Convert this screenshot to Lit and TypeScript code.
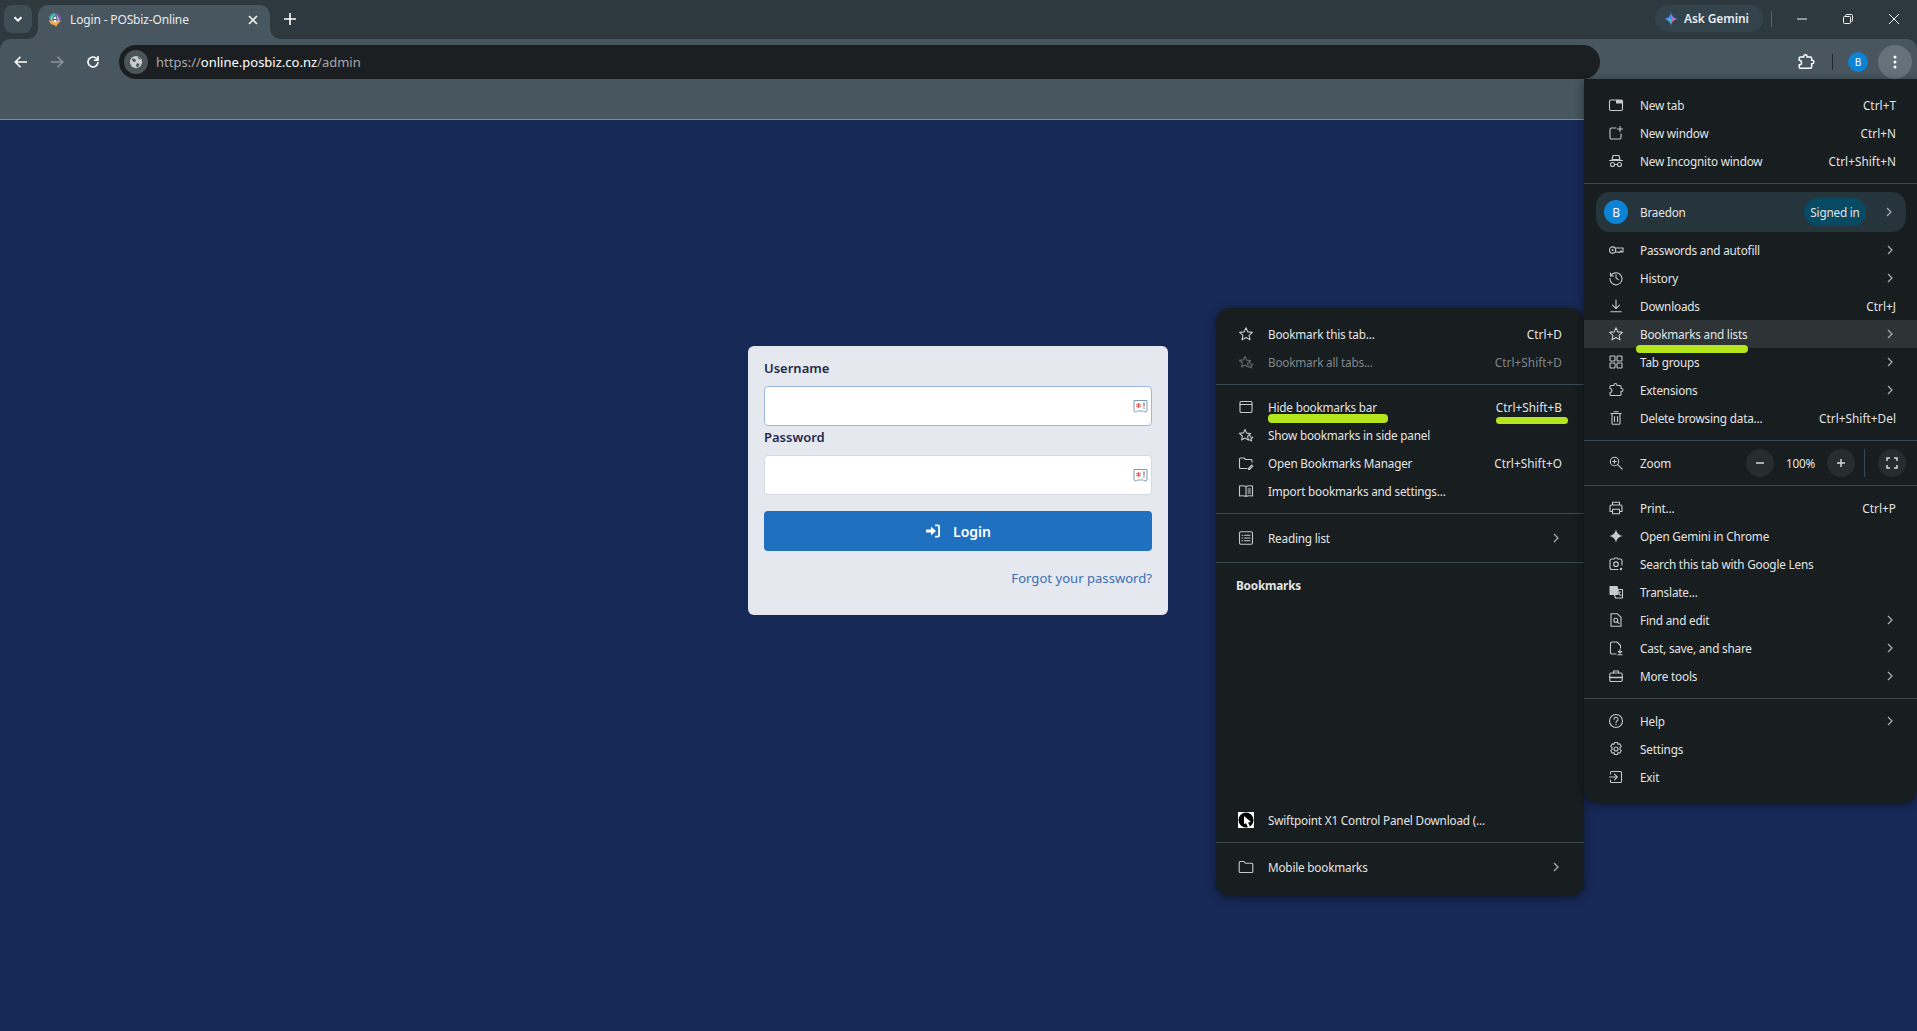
import { LitElement, html, css, svg, nothing } from 'lit';
import { customElement } from 'lit/decorators.js';

const PUZZLE = svg`<path d="M3 3.500h3V3a1.500 1.500 0 0 1 3 0v.5h3a1 1 0 0 1 1 1v2h.5a1.500 1.500 0 0 1 0 3H13v3a1 1 0 0 1-1 1H3a1 1 0 0 1-1-1v-2c1.500 0 2-1 2-1.700S3.500 6.500 2 6.500v-2a1 1 0 0 1 1-1z"/>`;

// line icons, all on a 16x16 box
const ICONS: Record<string, any> = {
  newTab: svg`<rect x="1.500" y="3" width="13" height="10.500" rx="1.500"/><path class="fill" d="M8 3h6.500v3.500H8z"/>`,
  newWindow: svg`<path d="M8 3H3.500A1.500 1.500 0 0 0 2 4.500v8A1.500 1.500 0 0 0 3.500 14h8a1.500 1.500 0 0 0 1.500-1.500V9M12 1.500v5M9.500 4h5"/>`,
  incognito: svg`<path d="M5 2.500h6l1 4H4zM1.500 7.500h13"/><circle cx="4.500" cy="11.500" r="2"/><circle cx="11.500" cy="11.500" r="2"/><path d="M6.500 11.500h3"/>`,
  key: svg`<circle cx="4.600" cy="8" r="3.100"/><circle class="fill" cx="4.600" cy="8" r="1"/><path d="M7.700 6h7.300v4h-1.500V9h-1.500v1.500H10V10H7.700"/>`,
  history: svg`<path d="M2.500 3v3h3M2.700 6A6 6 0 1 1 2 8.500M8 4.800V8l2.300 1.600"/>`,
  download: svg`<path d="M8 2v8.500M4.500 7.200 8 10.700l3.500-3.500M2.800 13.700h10.400"/>`,
  star: svg`<path d="m8 1.800 1.900 4.100 4.500.5-3.300 3 .9 4.400L8 11.600l-4 2.200.9-4.400-3.300-3 4.500-.5z"/>`,
  starPlus: svg`<path d="m7 2.500 1.600 3.600 4 .4-3 2.700.8 3.900L7 11l-3.400 1.900.8-3.900-3-2.700 4-.4z"/><path d="m11.500 8 1 2 2.300.3-1.700 1.500.5 2.200-2.100-1.200"/>`,
  groups: svg`<rect x="2" y="2" width="5" height="5" rx=".8"/><rect x="9" y="2" width="5" height="5" rx=".8"/><rect x="2" y="9" width="5" height="5" rx=".8"/><rect x="9" y="9" width="5" height="5" rx=".8"/>`,
  puzzle: PUZZLE,
  trash: svg`<path d="M2.800 3.500h10.400M6 1.800h4"/><rect x="4" y="3.500" width="8" height="10.700" rx="1"/><path d="M6.500 6.500v5M9.500 6.500v5"/>`,
  zoom: svg`<circle cx="6.500" cy="6.500" r="4.200"/><path d="m9.700 9.700 4.500 4.500M6.500 4.700v3.600M4.700 6.500h3.600"/>`,
  print: svg`<path d="M4.500 5V2.200h7V5M4.500 11.500H2V6.600A1.600 1.600 0 0 1 3.600 5h8.800A1.600 1.600 0 0 1 14 6.600v4.900h-2.500"/><rect x="4.500" y="9.200" width="7" height="4.600"/>`,
  gemini: svg`<path class="fill" d="M8 1c.5 4 3 6.500 7 7-4 .5-6.500 3-7 7-.5-4-3-6.500-7-7 4-.5 6.500-3 7-7z"/>`,
  lens: svg`<path d="M5.500 3H4a2 2 0 0 0-2 2v6.500a2 2 0 0 0 2 2h6M10.500 3H12a2 2 0 0 1 2 2v4"/><path d="M6 3l.7-1h2.600l.7 1"/><circle cx="8" cy="8.200" r="2.300"/><circle class="fill" cx="13" cy="13" r="1.200"/>`,
  translate: svg`<path class="fill" d="M1.500 2h8l1 3.500V11h-9z"/><path d="M10 5.500h4.500V14H7.500l-1-3"/><path d="M10 8h2.500M11 8.500c0 1.500.7 2.500 2 3"/>`,
  find: svg`<path d="M3 1.800h6.500L13 5.300v8.900H3z"/><circle cx="7.800" cy="8.300" r="2"/><path d="m9.300 9.800 1.700 1.700"/>`,
  cast: svg`<path d="M8 14H4a1.500 1.500 0 0 1-1.500-1.500v-9A1.500 1.500 0 0 1 4 2h5l3.500 3.500V8"/><path d="M12 9.500v3.300M10.300 11.500l1.700 1.600 1.700-1.600M9.800 14.800h4.400"/>`,
  tools: svg`<path d="M5.500 5V3h5v2"/><rect x="1.800" y="5" width="12.400" height="8.500" rx="1.200"/><path class="thick" d="M1.800 9.500h12.400"/>`,
  help: svg`<circle cx="8" cy="8" r="6.500"/><path d="M6 6.300A2 2 0 1 1 9 8c-.7.400-1 .8-1 1.600"/><circle class="fill" cx="8" cy="11.500" r=".7"/>`,
  gear: svg`<path d="m6.500 1.500h3l.5 1.900 1.800-.6 1.500 2.600-1.400 1.300.1.800-.1.800 1.400 1.300-1.500 2.600-1.800-.6-.5 1.900h-3l-.5-1.900-1.800.6-1.500-2.600 1.400-1.300-.1-.8.1-.8-1.400-1.300 1.500-2.600 1.800.6z"/><circle cx="8" cy="8" r="2"/>`,
  exit: svg`<path d="M2.500 5V3.500a1 1 0 0 1 1-1h9a1 1 0 0 1 1 1v9a1 1 0 0 1-1 1h-9a1 1 0 0 1-1-1V11M1.500 8H9M6.500 5.200 9.300 8l-2.800 2.800"/>`,
  bar: svg`<rect x="2" y="2.500" width="12" height="11" rx="1.200"/><path d="M2 5.500h12"/>`,
  folderEdit: svg`<path d="M14 7V5.500a1 1 0 0 0-1-1H7.500L6 3H2.500a1 1 0 0 0-1 1v8.500a1 1 0 0 0 1 1H9"/><path d="m10.500 13.500 3.300-3.300 1 1-3.300 3.300h-1z"/>`,
  book: svg`<path d="M8 3.500C6.500 2.700 4 2.700 1.500 3v10c2.500-.3 5-.3 6.500.5 1.500-.8 4-.8 6.500-.5V3C12 2.700 9.500 2.700 8 3.500zM8 3.500v10M10 6h2.500M10 8h2.500M10 10h2.500"/>`,
  readingList: svg`<rect x="1.500" y="1.800" width="13" height="12.400" rx="1.500"/><path d="M6.500 5.200h5.500M6.500 8h5.500M6.500 10.800h5.500M4 5.200h.8M4 8h.8M4 10.800h.8"/>`,
  folder: svg`<path d="M1.200 3.500a1 1 0 0 1 1-1h3.800l1.600 1.800h6.200a1 1 0 0 1 1 1v7.200a1 1 0 0 1-1 1H2.200a1 1 0 0 1-1-1z"/>`,
};

const icon = (name: string) => html`<svg class="ico" viewBox="0 0 16 16">${ICONS[name]}</svg>`;

const chevron = html`<svg class="chev" viewBox="0 0 8 12"><path d="m2 2 4 4-4 4"/></svg>`;

interface MenuRow {
  icon?: string;
  label?: string;
  keys?: string;
  more?: boolean;
  hover?: boolean;
  off?: boolean;
  mark?: string;
  keyMark?: boolean;
}

const MAIN_TOP: MenuRow[] = [
  { icon: 'newTab', label: 'New tab', keys: 'Ctrl+T' },
  { icon: 'newWindow', label: 'New window', keys: 'Ctrl+N' },
  { icon: 'incognito', label: 'New Incognito window', keys: 'Ctrl+Shift+N' },
];

const MAIN_BROWSE: MenuRow[] = [
  { icon: 'key', label: 'Passwords and autofill', more: true },
  { icon: 'history', label: 'History', more: true },
  { icon: 'download', label: 'Downloads', keys: 'Ctrl+J' },
  { icon: 'star', label: 'Bookmarks and lists', more: true, hover: true, mark: 'mark-lists' },
  { icon: 'groups', label: 'Tab groups', more: true },
  { icon: 'puzzle', label: 'Extensions', more: true },
  { icon: 'trash', label: 'Delete browsing data...', keys: 'Ctrl+Shift+Del' },
];

const MAIN_TOOLS: MenuRow[] = [
  { icon: 'print', label: 'Print...', keys: 'Ctrl+P' },
  { icon: 'gemini', label: 'Open Gemini in Chrome' },
  { icon: 'lens', label: 'Search this tab with Google Lens' },
  { icon: 'translate', label: 'Translate...' },
  { icon: 'find', label: 'Find and edit', more: true },
  { icon: 'cast', label: 'Cast, save, and share', more: true },
  { icon: 'tools', label: 'More tools', more: true },
];

const MAIN_END: MenuRow[] = [
  { icon: 'help', label: 'Help', more: true },
  { icon: 'gear', label: 'Settings' },
  { icon: 'exit', label: 'Exit' },
];

const SUB_TOP: MenuRow[] = [
  { icon: 'star', label: 'Bookmark this tab...', keys: 'Ctrl+D' },
  { icon: 'starPlus', label: 'Bookmark all tabs...', keys: 'Ctrl+Shift+D', off: true },
];

const SUB_MANAGE: MenuRow[] = [
  { icon: 'bar', label: 'Hide bookmarks bar', keys: 'Ctrl+Shift+B', mark: 'mark-hide', keyMark: true },
  { icon: 'starPlus', label: 'Show bookmarks in side panel' },
  { icon: 'folderEdit', label: 'Open Bookmarks Manager', keys: 'Ctrl+Shift+O' },
  { icon: 'book', label: 'Import bookmarks and settings...' },
];

@customElement('app-root')
export class AppRoot extends LitElement {
  static styles = css`
    :host {
      display: block;
      position: relative;
      width: 100%;
      height: 1031px;
      overflow: hidden;
      background: #172957;
      font-family: 'Noto Sans', 'Liberation Sans', sans-serif;
      color: #e3e3e3;
    }

    /* browser frame */
    .frame { background: #2d383f; }
    .strip {
      height: 39px;
      display: flex;
      align-items: flex-start;
      box-sizing: border-box;
    }
    .tab-search {
      width: 28px;
      height: 28px;
      margin: 5px 6px 0 4px;
      border-radius: 8px;
      background: #3f4d55;
      display: flex;
      align-items: center;
      justify-content: center;
    }
    .tab-search svg { width: 10px; height: 10px; fill: none; stroke: #fff; stroke-width: 2; }
    .tab {
      position: relative;
      width: 232px;
      height: 34px;
      margin-top: 5px;
      background: #47565f;
      border-radius: 10px 10px 0 0;
      display: flex;
      align-items: center;
      box-sizing: border-box;
      padding: 0 10px 5px;
      font-size: 12px;
      letter-spacing: -0.15px;
      color: #e8eaed;
    }
    /* the concave feet on both sides of the active tab */
    .tab::before,
    .tab::after {
      content: '';
      position: absolute;
      bottom: 0;
      width: 10px;
      height: 10px;
    }
    .tab::before { left: -10px; background: radial-gradient(circle at 0 0, transparent 9.500px, #47565f 10px); }
    .tab::after { right: -10px; background: radial-gradient(circle at 100% 0, transparent 9.500px, #47565f 10px); }
    .favicon { width: 14px; height: 14px; margin-right: 8px; flex: none; }
    .tab-title { flex: 1; }
    .tab-close { width: 10px; height: 10px; fill: none; stroke: #f0f0f0; stroke-width: 1.6; margin-right: 2px; }
    .new-tab { width: 12px; height: 12px; margin: 13px 0 0 14px; fill: none; stroke: #fff; stroke-width: 1.6; }
    .strip-right {
      margin-left: auto;
      display: flex;
      align-items: center;
      height: 38px;
    }
    .gemini {
      width: 108px;
      height: 27px;
      margin-top: -1px;
      border-radius: 13px;
      background: #33434c;
      display: flex;
      align-items: center;
      gap: 5px;
      box-sizing: border-box;
      padding-left: 8px;
      font-size: 12px;
      font-weight: 600;
      letter-spacing: -0.1px;
      color: #e8eaed;
    }
    .gemini svg { width: 16px; height: 16px; }
    .strip-sep { width: 1px; height: 16px; margin: 0 7px 0 8px; background: #55636b; }
    .win { width: 46px; height: 38px; display: flex; align-items: center; justify-content: center; }
    .win svg { width: 12px; height: 12px; fill: none; stroke: #f2f2f2; stroke-width: 1; }

    .toolbar {
      height: 40px;
      padding-top: 6px;
      background: #47565f;
      border-radius: 10px 10px 0 0;
      display: flex;
      align-items: center;
      box-sizing: border-box;
      position: relative;
    }
    .nav { width: 36px; height: 34px; display: flex; align-items: center; justify-content: center; flex: none; }
    .nav svg { width: 16px; height: 16px; fill: none; stroke: #fff; stroke-width: 1.6; }
    .nav.dim svg { stroke: #8a959b; }
    .nav-group { display: flex; padding-left: 3px; margin-right: 8px; }
    .omnibox {
      width: 1481px;
      height: 34px;
      border-radius: 17px;
      background: #1c1f22;
      display: flex;
      align-items: center;
      box-sizing: border-box;
      padding-left: 5px;
      font-size: 13px;
      color: #a4a8ab;
      flex: none;
    }
    .site {
      width: 24px;
      height: 24px;
      border-radius: 50%;
      background: #4a5459;
      display: flex;
      align-items: center;
      justify-content: center;
      margin-right: 8px;
    }
    .site svg { width: 14px; height: 14px; }
    .omnibox b { font-weight: 400; color: #fff; }
    .tool-right { margin-left: auto; display: flex; align-items: center; }
    .ext { width: 18px; height: 18px; fill: none; stroke: #fff; stroke-width: 1.3; margin-right: 17px; }
    .tool-sep { width: 1px; height: 16px; background: #1e272c; margin-right: 15px; }
    .avatar {
      width: 20px;
      height: 20px;
      border-radius: 50%;
      background: #0b84d6;
      color: #fff;
      font-size: 10px;
      display: flex;
      align-items: center;
      justify-content: center;
      margin-right: 10px;
    }
    .dots {
      width: 34px;
      height: 34px;
      margin-right: 5px;
      border-radius: 50%;
      background: #66727a;
      display: flex;
      align-items: center;
      justify-content: center;
    }
    .dots svg { width: 4px; height: 14px; fill: #fff; }
    .bookmarks-bar { height: 41px; background: #47565f; border-bottom: 1px solid #7d8c9c; box-sizing: border-box; }

    /* login page */
    .page {
      display: flex;
      justify-content: center;
      padding: 226px 1px 0 0;
    }
    .card {
      width: 420px;
      height: 269px;
      box-sizing: border-box;
      padding: 12px 16px;
      background: #e6e8ef;
      border-radius: 6px;
    }
    .field-label { font-size: 13px; font-weight: 600; line-height: 20px; color: #1f2a4d; }
    .input {
      height: 40px;
      margin: 8px 0 1px;
      background: #fff;
      border: 1px solid #d6d9e1;
      border-radius: 4px;
      box-sizing: border-box;
      display: flex;
      align-items: center;
      justify-content: flex-end;
      padding-right: 3px;
    }
    .input.focus { border-color: #9bb9de; }
    .input svg { width: 15px; height: 15px; margin-top: 1px; }
    .login {
      height: 40px;
      margin-top: 16px;
      border-radius: 4px;
      background: #2070c0;
      color: #fff;
      font-size: 14px;
      font-weight: 600;
      display: flex;
      align-items: center;
      justify-content: center;
      gap: 12px;
    }
    .login svg { width: 16px; height: 16px; fill: #fff; stroke: none; }
    .forgot { margin-top: 17px; text-align: right; font-size: 13.100px; line-height: 20px; color: #3a70b0; }

    /* chrome menus */
    .menu {
      position: absolute;
      background: #181d20;
      box-shadow: 0 2px 10px rgba(0, 0, 0, 0.45);
      box-sizing: border-box;
      font-size: 11.750px;
      letter-spacing: -0.2px;
      display: flex;
      flex-direction: column;
    }
    .main-menu { left: 1584px; top: 79px; width: 333px; height: 724px; padding: 12px 0; border-radius: 0 0 14px 14px; }
    .sub-menu { left: 1216px; top: 308px; width: 368px; height: 588px; padding: 12px 0 15px; border-radius: 14px; }
    .row {
      position: relative;
      flex: none;
      height: 28px;
      display: flex;
      align-items: center;
      box-sizing: border-box;
      padding-right: 21px;
    }
    .main-menu .row { padding-left: 24px; }
    .sub-menu .row { padding-left: 22px; padding-right: 22px; }
    .row.hover { background: #2e3336; }
    .row.off { color: #80868a; }
    .ico {
      width: 16px;
      height: 16px;
      flex: none;
      fill: none;
      stroke: #c7c9cb;
      stroke-width: 1.1;
      stroke-linejoin: round;
      stroke-linecap: round;
      margin-right: 16px;
    }
    .ico .fill { fill: #c7c9cb; stroke: none; }
    .ico .thick { stroke-width: 1.6; }
    .sub-menu .ico { margin-right: 14px; }
    .row.off .ico { stroke: #666c70; }
    .keys { margin-left: auto; letter-spacing: 0.05px; }
    .chev { width: 8px; height: 12px; margin-left: auto; margin-right: 2px; fill: none; stroke: #a6aaac; stroke-width: 1.300; }
    .sep { height: 1px; flex: none; margin: 8px 0; background: #3b4850; }
    .sep.before-list { margin: 8px 0 10px; }
    .sep.after-list { margin: 10px 0 9px; }
    .sep.end { margin: 8px 0 10px; }
    .top-gap { margin-top: 4px; }

    .profile {
      flex: none;
      height: 40px;
      width: 310px;
      margin-left: 12px;
      border-radius: 14px;
      background: #26343c;
      display: flex;
      align-items: center;
      box-sizing: border-box;
      padding: 0 11px 0 8px;
    }
    .profile-pic {
      width: 24px;
      height: 24px;
      margin-right: 12px;
      border-radius: 50%;
      background: #0b84d6;
      color: #fff;
      font-size: 12px;
      display: flex;
      align-items: center;
      justify-content: center;
    }
    .signed {
      margin-left: auto;
      margin-right: 19px;
      width: 62px;
      height: 28px;
      border-radius: 14px;
      background: #074a63;
      display: flex;
      align-items: center;
      justify-content: center;
    }
    .profile .chev { margin-left: 0; }

    .main-menu .zoom-row { padding-right: 11px; }
    .zoom-controls { margin-left: auto; display: flex; align-items: center; }
    .round {
      width: 28px;
      height: 28px;
      border-radius: 50%;
      background: #262c2f;
      display: flex;
      align-items: center;
      justify-content: center;
    }
    .round svg { width: 12px; height: 12px; fill: none; stroke: #d8d8d8; stroke-width: 1.500; }
    .percent { width: 53px; text-align: center; }
    .zoom-sep { width: 1px; height: 28px; margin: 0 13px 0 9px; background: #3b4850; }

    .section-title { flex: none; height: 26px; margin-bottom: 2px; display: flex; align-items: center; padding-left: 20px; font-weight: 700; }
    .push { margin-top: auto; }
    .swift { width: 16px; height: 16px; flex: none; margin-right: 14px; }

    /* green highlighter marks drawn over the screenshot */
    .mark { position: absolute; background: #b5e61d; border-radius: 4px; }
    .mark-lists { left: 52px; top: 25px; width: 112px; height: 8px; }
    .mark-hide { left: 52px; top: 21px; width: 120px; height: 9px; }
    .mark-keys { left: 280px; top: 24px; width: 72px; height: 7px; }
  `;

  renderRow(r: MenuRow) {
    return html`
      <div class="row ${r.hover ? 'hover' : ''} ${r.off ? 'off' : ''}">
        ${r.icon ? icon(r.icon) : nothing}
        <span>${r.label}</span>
        ${r.keys ? html`<span class="keys">${r.keys}</span>` : nothing}
        ${r.more ? chevron : nothing}
        ${r.mark ? html`<span class="mark ${r.mark}"></span>` : nothing}
        ${r.keyMark ? html`<span class="mark mark-keys"></span>` : nothing}
      </div>
    `;
  }

  renderFrame() {
    return html`
      <div class="frame">
        <div class="strip">
          <div class="tab-search"><svg viewBox="0 0 10 10"><path d="m1.500 3.200 3.500 3.500 3.500-3.500"/></svg></div>
          <div class="tab">
            <svg class="favicon" viewBox="0 0 14 14">
              <circle cx="7" cy="6" r="6" fill="#7a55c8"/>
              <path d="M1 6a6 6 0 0 1 6-6v6z" fill="#35b5a5"/>
              <path d="M1 7.500a6 6 0 0 0 5.500 4.500l1.500 2 1.500-2.500L13 7.500z" fill="#f0a93c"/>
              <circle cx="7" cy="6" r="3.600" fill="#e6edf2"/>
              <path d="M5 8.500V5a2 2 0 0 1 4 0v3.500M5 6.500h4" fill="none" stroke="#3f5866" stroke-width="1.100"/>
            </svg>
            <span class="tab-title">Login - POSbiz-Online</span>
            <svg class="tab-close" viewBox="0 0 10 10"><path d="m1 1 8 8M9 1 1 9"/></svg>
          </div>
          <svg class="new-tab" viewBox="0 0 12 12"><path d="M6 0v12M0 6h12"/></svg>
          <div class="strip-right">
            <div class="gemini">
              <svg viewBox="0 0 16 16">
                <path d="M8 1c-.5 4-3 6.500-7 7h7z" fill="#3f8cf0"/>
                <path d="M8 1c.5 4 3 6.500 7 7H8z" fill="#8a78e0"/>
                <path d="M15 8c-4 .5-6.500 3-7 7V8z" fill="#e0705a"/>
                <path d="M8 15c-.5-4-3-6.500-7-7h7z" fill="#55b0d8"/>
              </svg>
              <span>Ask Gemini</span>
            </div>
            <div class="strip-sep"></div>
            <div class="win"><svg viewBox="0 0 12 12"><path d="M1 6h10"/></svg></div>
            <div class="win"><svg viewBox="0 0 12 12"><rect x="1.500" y="3.500" width="7" height="7" rx="1"/><path d="M3.500 3.500V2.500a1 1 0 0 1 1-1h5a1 1 0 0 1 1 1v5a1 1 0 0 1-1 1h-1"/></svg></div>
            <div class="win"><svg viewBox="0 0 12 12"><path d="m1 1 10 10M11 1 1 11"/></svg></div>
          </div>
        </div>
        <div class="toolbar">
          <div class="nav-group">
            <div class="nav"><svg viewBox="0 0 16 16"><path d="M14 8H2.500M7.500 2.800 2.300 8l5.200 5.200"/></svg></div>
            <div class="nav dim"><svg viewBox="0 0 16 16"><path d="M2 8h11.500M8.500 2.800 13.700 8l-5.200 5.200"/></svg></div>
            <div class="nav"><svg viewBox="0 0 16 16"><path d="M13 8a5 5 0 1 1-1.500-3.600L13 6M13 2v4.200H8.800"/></svg></div>
          </div>
          <div class="omnibox">
            <div class="site">
              <svg viewBox="0 0 16 16"><circle cx="8" cy="8" r="7" fill="#c9cdcf"/><path d="M3 4.500 6 4l2 2-1 2-2.500-.5zM9 9.500l3 .5-1 3-2 1-1-2zM9.500 1.800 11 4.500l2.800.5L12.500 3z" fill="#4a5459"/></svg>
            </div>
            <span>https://<b>online.posbiz.co.nz</b>/admin</span>
          </div>
          <div class="tool-right">
            <svg class="ext" viewBox="0 0 16 16">${PUZZLE}</svg>
            <div class="tool-sep"></div>
            <div class="avatar">B</div>
            <div class="dots"><svg viewBox="0 0 4 14"><circle cx="2" cy="2" r="1.500"/><circle cx="2" cy="7" r="1.500"/><circle cx="2" cy="12" r="1.500"/></svg></div>
          </div>
        </div>
        <div class="bookmarks-bar"></div>
      </div>
    `;
  }

  renderLogin() {
    const filler = html`<svg viewBox="0 0 15 15">
      <path d="M1 1.500h13v10.500c-1 1.500-3 1-3.500 0h-6c-.5 1-2.500 1.500-3.500 0z" fill="#fff" stroke="#7d9bb8" stroke-width="1"/>
      <path d="M5.500 4v5M3.300 5.200l4.400 2.600M7.700 5.200 3.300 7.800" stroke="#e05a55" stroke-width="1.100" fill="none"/>
      <path d="M11 3.500v4M11 8.500v1.200" stroke="#666" stroke-width="1.100" fill="none"/>
    </svg>`;
    return html`
      <div class="page">
        <div class="card">
          <div class="field-label">Username</div>
          <div class="input focus">${filler}</div>
          <div class="field-label">Password</div>
          <div class="input">${filler}</div>
          <div class="login">
            <svg viewBox="0 0 16 16"><path d="M1 6.500h5V3.500L11 8l-5 4.500v-3H1z"/><path d="M10 1.500h3a2 2 0 0 1 2 2v9a2 2 0 0 1-2 2h-3v-1.800h3l.2-.2V3.500l-.2-.2h-3z"/></svg>
            <span>Login</span>
          </div>
          <div class="forgot">Forgot your password?</div>
        </div>
      </div>
    `;
  }

  renderMainMenu() {
    return html`
      <div class="menu main-menu">
        ${MAIN_TOP.map((r) => this.renderRow(r))}
        <div class="sep"></div>
        <div class="profile">
          <div class="profile-pic">B</div>
          <span>Braedon</span>
          <div class="signed">Signed in</div>
          ${chevron}
        </div>
        <div class="top-gap"></div>
        ${MAIN_BROWSE.map((r) => this.renderRow(r))}
        <div class="sep"></div>
        <div class="row zoom-row">
          ${icon('zoom')}
          <span>Zoom</span>
          <div class="zoom-controls">
            <div class="round"><svg viewBox="0 0 12 12"><path d="M2 6h8"/></svg></div>
            <span class="percent">100%</span>
            <div class="round"><svg viewBox="0 0 12 12"><path d="M2 6h8M6 2v8"/></svg></div>
            <div class="zoom-sep"></div>
            <div class="round"><svg viewBox="0 0 12 12"><path d="M1 4V1h3M8 1h3v3M11 8v3H8M4 11H1V8"/></svg></div>
          </div>
        </div>
        <div class="sep"></div>
        ${MAIN_TOOLS.map((r) => this.renderRow(r))}
        <div class="sep"></div>
        ${MAIN_END.map((r) => this.renderRow(r))}
      </div>
    `;
  }

  renderSubMenu() {
    return html`
      <div class="menu sub-menu">
        ${SUB_TOP.map((r) => this.renderRow(r))}
        <div class="sep"></div>
        ${SUB_MANAGE.map((r) => this.renderRow(r))}
        <div class="sep before-list"></div>
        ${this.renderRow({ icon: 'readingList', label: 'Reading list', more: true })}
        <div class="sep after-list"></div>
        <div class="section-title">Bookmarks</div>
        <div class="row push">
          <svg class="swift" viewBox="0 0 16 16">
            <rect width="16" height="16" fill="#fff"/>
            <circle cx="8" cy="8" r="7.500" fill="#000"/>
            <path d="m6 4 7 6-3 .5 2 4-2 .8-2-4L6 12z" fill="#fff"/>
          </svg>
          <span>Swiftpoint X1 Control Panel Download (...</span>
        </div>
        <div class="sep end"></div>
        ${this.renderRow({ icon: 'folder', label: 'Mobile bookmarks', more: true })}
      </div>
    `;
  }

  render() {
    return html`
      ${this.renderFrame()}
      ${this.renderLogin()}
      ${this.renderSubMenu()}
      ${this.renderMainMenu()}
    `;
  }
}
